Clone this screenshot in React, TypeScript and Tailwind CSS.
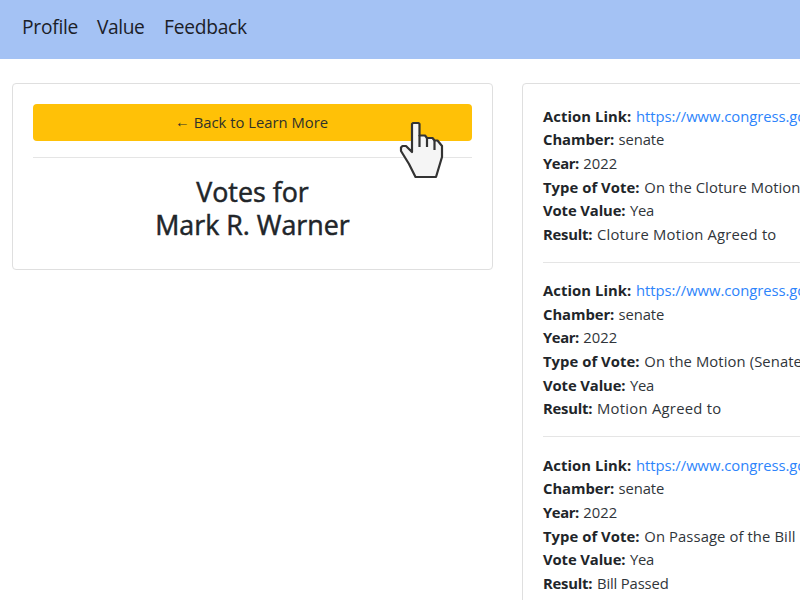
type Vote = { link: string; type: string; typeTracking: string; result: string; resultTracking: string };

const votes: Vote[] = [
  {
    link: 'https://www.congress.gov/',
    type: 'On the Cloture Motion',
    typeTracking: 'tracking-[0.07px]',
    result: 'Cloture Motion Agreed to',
    resultTracking: 'tracking-[0.2px]',
  },
  {
    link: 'https://www.congress.gov/',
    type: 'On the Motion (Senate)',
    typeTracking: 'tracking-[0.1px]',
    result: 'Motion Agreed to',
    resultTracking: 'tracking-[0.27px]',
  },
  {
    link: 'https://www.congress.gov/',
    type: 'On Passage of the Bill',
    typeTracking: 'tracking-[0.1px]',
    result: 'Bill Passed',
    resultTracking: 'tracking-[-0.15px]',
  },
];

type FieldProps = {
  label: string;
  value: string;
  labelClass?: string;
  valueClass?: string;
};

function Field({ label, value, labelClass = '', valueClass = '' }: FieldProps) {
  return (
    <div className="flex h-[23.65px] whitespace-nowrap">
      <b className={`shrink-0 font-bold ${labelClass}`}>{label}:</b>
      <span className={`text-[#30353a] ${valueClass}`}>{value}</span>
    </div>
  );
}

function HandCursor() {
  return (
    <svg
      className="absolute left-[366px] top-[17px]"
      width="46"
      height="59"
      viewBox="399 121 46 59"
      fill="#f5f5f5"
      stroke="#333"
      strokeWidth="2.2"
      strokeLinejoin="round"
    >
      <path d="M412 152 V124 L413 123 H418.5 L419.5 124 V135.5 H425 L427 138 H432.500 L434.500 140.500 H437.500 L442 146 V157 L436 177 H415.500 L409 164 L401 151 V147.500 L402.500 146 H406 Z" />
      <path d="M419.5 135 V147 M427 138 V147 M434.500 140.500 V150" fill="none" />
    </svg>
  );
}

export default function App() {
  return (
    <div className="h-[600px] w-[800px] overflow-hidden bg-white font-['Open_Sans',sans-serif] text-[14.8px] leading-[23.65px] text-[#212529]">
      <nav className="flex h-[59px] items-center bg-[#a4c2f4] pb-[6px] pl-[22px] text-[19.2px] text-[#1b2028]">
        <a className="w-[75px] tracking-[-0.25px]">Profile</a>
        <a className="w-[67px] tracking-[-0.4px]">Value</a>
        <a className="tracking-[-0.25px]">Feedback</a>
      </nav>
      <div className="flex items-start gap-[29px] pl-3 pt-6">
        <section className="h-[187px] w-[481px] shrink-0 rounded-[4px] border border-[#dfdfdf] p-5">
          <button className="relative flex h-[37px] w-full items-center justify-center gap-1 rounded-[4px] bg-[#ffc107] pr-[2px] text-[#30322a]">
            <span className="pb-[2px]">←</span>
            <span>Back to Learn More</span>
            <HandCursor />
          </button>
          <hr className="mt-4 border-[#e5e5e5]" />
          <h1 className="mt-[17px] text-center text-[26.8px] font-normal leading-[33px] [-webkit-text-stroke:0.5px_#212529]">
            Votes for
            <br />
            Mark R. Warner
          </h1>
        </section>
        <section className="h-[600px] w-[481px] shrink-0 rounded-[4px] border border-[#dfdfdf] px-5 pt-[20.6px]">
          {votes.map((v, i) => (
            <div key={i} className="mb-[16.3px] border-b border-[#e5e5e5] pb-[15.4px]">
              <Field
                label="Action Link"
                value={v.link}
                labelClass="w-[93px] tracking-[0.07px]"
                valueClass="tracking-[-0.04px] text-[#2d84fb]!"
              />
              <Field label="Chamber" value="senate" labelClass="w-[75.5px] tracking-[-0.05px]" valueClass="tracking-[-0.08px]" />
              <Field label="Year" value="2022" labelClass="w-[40.3px] tracking-[-0.4px]" />
              <Field label="Type of Vote" value={v.type} labelClass="w-[101.3px] tracking-[0.05px]" valueClass={v.typeTracking} />
              <Field label="Vote Value" value="Yea" labelClass="w-[87px] tracking-[-0.1px]" valueClass="tracking-[-0.3px]" />
              <Field label="Result" value={v.result} labelClass="w-[54px] tracking-[-0.2px]" valueClass={v.resultTracking} />
            </div>
          ))}
        </section>
      </div>
    </div>
  );
}
